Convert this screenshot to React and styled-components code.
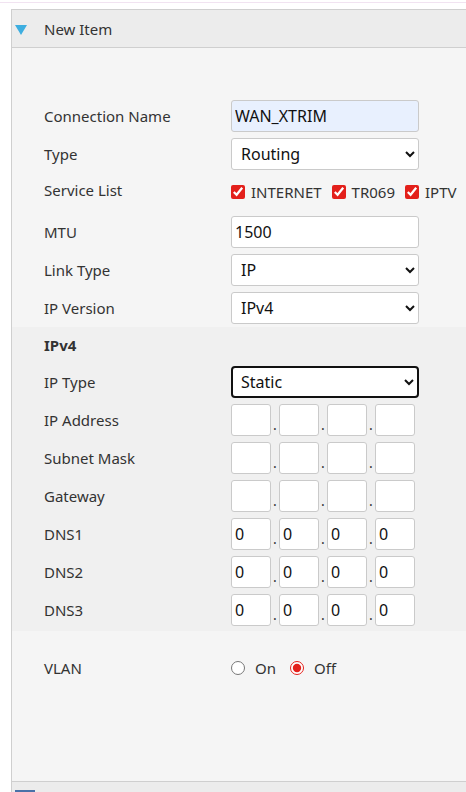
import React from "react";
import styled, { createGlobalStyle } from "styled-components";

const GlobalStyle = createGlobalStyle`
  html, body {
    margin: 0;
    padding: 0;
    background: #fff;
    font-family: "Noto Sans", "Open Sans", sans-serif;
    color: #333;
    overflow: hidden;
  }
`;

const Page = styled.div`
  padding-top: 2px;
  height: 792px;
  box-sizing: border-box;
`;

const TopRule = styled.div`
  height: 1px;
  background: #f1e3f1;
  margin-bottom: 6px;
`;

const Panel = styled.div`
  margin-left: 11px;
  border-left: 1px solid #cfcfcf;
  border-top: 1px solid #cfcfcf;
`;

const Header = styled.div`
  display: flex;
  align-items: center;
  height: 37px;
  background: #ececec;
  border-bottom: 1px solid #cfcfcf;
  font-size: 15px;
  color: #333;
`;

const Caret = styled.span`
  width: 0;
  height: 0;
  margin: 2px 17px 0 3px;
  border-left: 6px solid transparent;
  border-right: 6px solid transparent;
  border-top: 10px solid #3eaee0;
`;

const Body = styled.div`
  background: #f5f5f5;
  padding-top: 49px;
  height: 734px;
  box-sizing: border-box;
  border-bottom: 1px solid #cfcfcf;
`;

const Row = styled.div`
  display: grid;
  grid-template-columns: 187px 1fr;
  align-items: ${(p) => (p.top ? "start" : "center")};
  height: ${(p) => p.h || 38}px;
  padding-left: 32px;
  box-sizing: border-box;
`;

const Label = styled.div`
  font-size: 15px;
  color: #333;
  font-weight: ${(p) => (p.bold ? 700 : 400)};
`;

const TextInput = styled.input`
  width: 188px;
  height: 32px;
  box-sizing: border-box;
  border: 1px solid #cacaca;
  border-radius: 3px;
  padding: 0 3px;
  font-family: inherit;
  font-size: 16px;
  color: #111;
  background: ${(p) => (p.filled ? "#e8f0fe" : "#fff")};
  outline: none;
`;

const Select = styled.select`
  width: 188px;
  height: 32px;
  box-sizing: border-box;
  border: ${(p) => (p.focused ? "2px solid #111" : "1px solid #cacaca")};
  border-radius: ${(p) => (p.focused ? 4 : 3)}px;
  padding: 0 ${(p) => (p.focused ? 4 : 5)}px;
  font-family: inherit;
  font-size: 16px;
  color: #111;
  background: #fff;
  outline: none;
`;

const Checks = styled.div`
  display: flex;
  align-items: center;
  margin-top: 9px;
  white-space: nowrap;
`;

const CheckItem = styled.label`
  display: flex;
  align-items: center;
  margin-right: 10px;
  font-size: 15px;
  color: #333;
`;

const Box = styled.input`
  margin: 0 6px 0 0;
  width: 14px;
  height: 14px;
  accent-color: #e3201b;
`;

const Section = styled.div`
  background: #f0f0f0;
  padding-bottom: 2px;
`;

const IpGroup = styled.div`
  display: flex;
  align-items: flex-end;
`;

const Octet = styled.input`
  width: 40px;
  height: 32px;
  box-sizing: border-box;
  border: 1px solid #cacaca;
  border-radius: 3px;
  padding: 0 3px;
  font-family: inherit;
  font-size: 16px;
  color: #111;
  background: #fff;
  outline: none;
`;

const Dot = styled.span`
  width: 8px;
  text-align: center;
  font-size: 14px;
  line-height: 14px;
  padding-bottom: 4px;
  color: #333;
`;

const Radios = styled.div`
  display: flex;
  align-items: center;
`;

const RadioItem = styled.label`
  display: flex;
  align-items: center;
  margin-right: 14px;
  font-size: 15px;
  color: #333;
`;

const Radio = styled.input`
  margin: 0 10px 0 0;
  width: 14px;
  height: 14px;
  accent-color: #e3201b;
`;

const NextHeader = styled.div`
  height: 20px;
  background: #ececec;
  padding: 8px 0 0 3px;
`;

const NextIcon = styled.div`
  width: 20px;
  height: 3px;
  background: #4a71a8;
`;

function IpField({ value }) {
  return (
    <IpGroup>
      {[0, 1, 2, 3].map((i) => (
        <React.Fragment key={i}>
          <Octet defaultValue={value} />
          {i < 3 && <Dot>.</Dot>}
        </React.Fragment>
      ))}
    </IpGroup>
  );
}

export default function App() {
  return (
    <Page>
      <GlobalStyle />
      <TopRule />
      <Panel>
        <Header>
          <Caret />
          New Item
        </Header>
        <Body>
          <Row>
            <Label>Connection Name</Label>
            <TextInput filled defaultValue="WAN_XTRIM" />
          </Row>
          <Row>
            <Label>Type</Label>
            <Select defaultValue="Routing">
              <option>Routing</option>
              <option>Bridge</option>
            </Select>
          </Row>
          <Row h={40} top>
            <Label style={{ marginTop: 7 }}>Service List</Label>
            <Checks>
              <CheckItem>
                <Box type="checkbox" defaultChecked />
                INTERNET
              </CheckItem>
              <CheckItem>
                <Box type="checkbox" defaultChecked />
                TR069
              </CheckItem>
              <CheckItem>
                <Box type="checkbox" defaultChecked />
                IPTV
              </CheckItem>
            </Checks>
          </Row>
          <Row>
            <Label>MTU</Label>
            <TextInput defaultValue="1500" />
          </Row>
          <Row>
            <Label>Link Type</Label>
            <Select defaultValue="IP">
              <option>IP</option>
              <option>PPP</option>
            </Select>
          </Row>
          <Row>
            <Label>IP Version</Label>
            <Select defaultValue="IPv4">
              <option>IPv4</option>
              <option>IPv6</option>
              <option>IPv4/IPv6</option>
            </Select>
          </Row>
          <Section>
            <Row h={36}>
              <Label bold>IPv4</Label>
            </Row>
            <Row>
              <Label>IP Type</Label>
              <Select focused defaultValue="Static">
                <option>Static</option>
                <option>DHCP</option>
              </Select>
            </Row>
            <Row>
              <Label>IP Address</Label>
              <IpField value="" />
            </Row>
            <Row>
              <Label>Subnet Mask</Label>
              <IpField value="" />
            </Row>
            <Row>
              <Label>Gateway</Label>
              <IpField value="" />
            </Row>
            <Row>
              <Label>DNS1</Label>
              <IpField value="0" />
            </Row>
            <Row>
              <Label>DNS2</Label>
              <IpField value="0" />
            </Row>
            <Row>
              <Label>DNS3</Label>
              <IpField value="0" />
            </Row>
          </Section>
          <Row style={{ marginTop: 18 }}>
            <Label>VLAN</Label>
            <Radios>
              <RadioItem>
                <Radio type="radio" name="vlan" />
                On
              </RadioItem>
              <RadioItem>
                <Radio type="radio" name="vlan" defaultChecked />
                Off
              </RadioItem>
            </Radios>
          </Row>
        </Body>
        <NextHeader>
          <NextIcon />
        </NextHeader>
      </Panel>
    </Page>
  );
}
